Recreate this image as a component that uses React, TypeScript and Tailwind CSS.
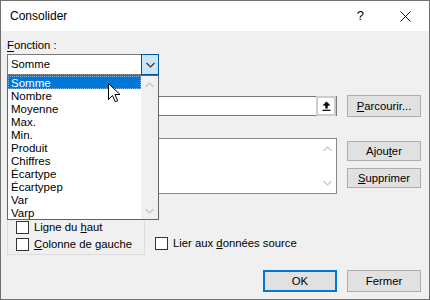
import { ReactNode } from 'react'

const items = ['Somme', 'Nombre', 'Moyenne', 'Max.', 'Min.', 'Produit', 'Chiffres', 'Écartype', 'Écartypep', 'Var', 'Varp']

function Chevron({ up = false, color = '#c4c4c4' }: { up?: boolean; color?: string }) {
  return (
    <svg width="9" height="6" viewBox="0 0 9 6">
      <path d={up ? 'M0.5 5 L4.5 1 L8.5 5' : 'M0.5 1 L4.5 5 L8.5 1'} fill="none" stroke={color} strokeWidth="1.1" />
    </svg>
  )
}

function Button({ children, className = '' }: { children: ReactNode; className?: string }) {
  return (
    <div
      className={`w-[74px] flex items-center justify-center bg-[#e1e1e1] border border-[#adadad] ${className}`}
    >
      {children}
    </div>
  )
}

function Checkbox({ children }: { children: ReactNode }) {
  return (
    <div className="flex items-center h-[13px]">
      <div className="w-[13px] h-[13px] bg-white border border-[#333333] shrink-0" />
      <span className="ml-[5px] leading-[13px] whitespace-nowrap">{children}</span>
    </div>
  )
}

export default function App() {
  return (
    <div className="w-[430px] h-[300px] bg-[#f0f0f0] border border-[#707070] relative overflow-hidden flex flex-col font-['Liberation_Sans',Arial,sans-serif] text-[11.3px] text-black">
      {/* title bar */}
      <div className="h-[30px] bg-white flex items-center shrink-0">
        <span className="ml-[9px] text-[12px] leading-[16px]">Consolider</span>
        <span className="ml-auto mr-[36px] text-[13px] leading-[16px]">?</span>
        <svg width="11" height="11" viewBox="0 0 11 11" className="mr-[18px]">
          <path d="M0.5 0.5 L10.5 10.5 M10.5 0.5 L0.5 10.5" stroke="#111" strokeWidth="1" />
        </svg>
      </div>

      {/* body */}
      <div className="flex flex-col pl-[6px] pr-[8px]">
        <div className="mt-[6px] h-[16px] leading-[16px]">
          <u className="underline-offset-2">F</u>onction :
        </div>
        <div className="mt-[1px] w-[152px] h-[21px] bg-white border border-[#7a7a7a] flex items-center">
          <span className="pl-[3px] flex-1">Somme</span>
          <div className="w-[18px] h-[21px] -mr-px -my-px bg-[#cce4f7] border border-[#005499] flex items-center justify-center">
            <Chevron color="#333" />
          </div>
        </div>

        {/* labels below are covered by the open list */}
        <div className="mt-[4px] h-[16px] leading-[16px] invisible">
          <u>R</u>éférence :
        </div>
        <div className="flex items-start h-[22px]">
          <div className="flex-1 h-[20px] mt-[1px] bg-white border border-[#7a7a7a] flex">
            <div className="flex-1" />
            <div className="w-[20px] h-[20px] -my-px bg-white border-2 border-[#cccccc] flex items-center justify-center">
              <svg width="9" height="10" viewBox="0 0 9 10">
                <path d="M4.5 0.5 L8.5 4.5 L5.7 4.5 L5.7 7.5 L3.3 7.5 L3.3 4.5 L0.5 4.5 Z" fill="#000" />
                <path d="M0.5 9.3 L8.5 9.3" stroke="#000" strokeWidth="1.2" />
              </svg>
            </div>
          </div>
          <Button className="ml-[10px] h-[22px]">
            <u>P</u>arcourir...
          </Button>
        </div>

        <div className="mt-[5px] h-[16px] leading-[16px] invisible">
          <u>T</u>outes les références :
        </div>
        <div className="flex items-start">
          <div className="flex-1 h-[56px] bg-white border border-[#828790] flex justify-end">
            <div className="w-[17px] flex flex-col items-center justify-between py-[7px]">
              <Chevron up color="#c8c8c8" />
              <Chevron color="#c8c8c8" />
            </div>
          </div>
          <div className="ml-[10px] flex flex-col">
            <Button className="mt-[3px] h-[20px]">
              Ajou<u>t</u>er
            </Button>
            <Button className="mt-[7px] h-[20px]">
              <u>S</u>upprimer
            </Button>
          </div>
        </div>

        <div className="mt-[7px] flex items-end">
          <div className="w-[138px] h-[54px] border border-[#dcdcdc] pl-[8px] pt-[19px] flex flex-col gap-[4px]">
            <Checkbox>
              Ligne du <u>h</u>aut
            </Checkbox>
            <Checkbox>
              <u>C</u>olonne de gauche
            </Checkbox>
          </div>
          <div className="ml-[10px] mb-[5px]">
            <Checkbox>
              Lier aux <u>d</u>onnées source
            </Checkbox>
          </div>
        </div>

        <div className="mt-[15px] flex justify-end gap-[10px]">
          <Button className="h-[22px] !border-2 !border-[#0078d7]">OK</Button>
          <Button className="h-[22px]">Fermer</Button>
        </div>
      </div>

      {/* open dropdown list */}
      <div className="absolute left-[6px] top-[74px] w-[152px] h-[145px] bg-white border border-[#646464] flex">
        <div className="flex-1 flex flex-col">
          {items.map((it, i) => (
            <div
              key={it}
              className={`h-[13px] leading-[14px] pl-[3px] text-[11.5px] ${
                i === 0 ? 'bg-[#0078d7] text-white outline-1 outline-dotted outline-[#7fb3e6] -outline-offset-1' : ''
              }`}
            >
              {it}
            </div>
          ))}
        </div>
        <div className="w-[17px] bg-[#f0f0f0] flex flex-col items-center justify-between pt-[6px] pb-[5px]">
          <Chevron up color="#c4c4c4" />
          <Chevron color="#c4c4c4" />
        </div>
      </div>

      {/* mouse cursor */}
      <svg width="13" height="20" viewBox="0 0 13 20" className="absolute left-[107px] top-[82px]">
        <path d="M0.5 0.5 L0.5 16.5 L4.5 12.5 L7.3 18.8 L9.7 17.8 L7 11.5 L12 11.5 Z" fill="#fff" stroke="#000" strokeWidth="1" />
      </svg>
    </div>
  )
}
